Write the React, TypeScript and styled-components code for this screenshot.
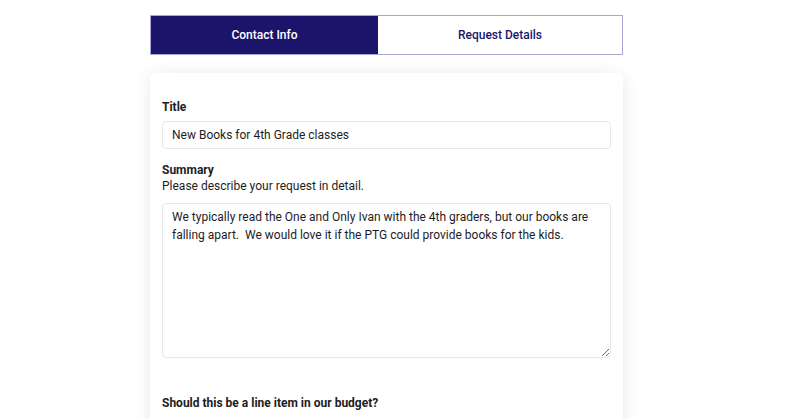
import styled, { createGlobalStyle } from "styled-components";

const GlobalStyle = createGlobalStyle`
    body {
        margin: 0;
        background: #ffffff;
        font-family: Roboto, "Liberation Sans", sans-serif;
        color: #1f1f1f;
    }
`;

const tabs = ["Contact Info", "Request Details"];

function App() {
    const active = 0;

    return (
        <>
            <GlobalStyle />
            <PageStyle>
                <TabBar>
                    {tabs.map((label, i) => (
                        <Tab key={label} $active={i === active}>
                            {label}
                        </Tab>
                    ))}
                </TabBar>
                <Card>
                    <Field>
                        <Label>Title</Label>
                        <TextInput defaultValue="New Books for 4th Grade classes" />
                    </Field>
                    <Field $top={13}>
                        <Label>Summary</Label>
                        <Help>Please describe your request in detail.</Help>
                        <TextArea
                            defaultValue={
                                "We typically read the One and Only Ivan with the 4th graders, but our books are falling apart.  We would love it if the PTG could provide books for the kids."
                            }
                        />
                    </Field>
                    <Field $top={37}>
                        <Label>Should this be a line item in our budget?</Label>
                    </Field>
                </Card>
            </PageStyle>
        </>
    );
}

const PageStyle = styled.div`
    width: 473px;
    padding: 15px 0 0 150px;
`;

const TabBar = styled.div`
    display: flex;
    height: 40px;
    border: 1px solid #a9a6d4;
    box-sizing: border-box;
`;

const Tab = styled.div<{ $active: boolean }>`
    flex: ${({ $active }) => ($active ? "0 0 227px" : "1")};
    display: flex;
    align-items: center;
    justify-content: center;
    font-size: 12px;
    font-weight: 500;
    background: ${({ $active }) => ($active ? "#1a156b" : "#ffffff")};
    color: ${({ $active }) => ($active ? "#ffffff" : "#1a156b")};
`;

const Card = styled.div`
    margin-top: 18px;
    padding: 26px 12px 40px;
    background: #ffffff;
    border-radius: 5px;
    box-shadow: 0 2px 18px rgba(0, 0, 0, 0.09);
`;

const Field = styled.div<{ $top?: number }>`
    display: flex;
    flex-direction: column;
    margin-top: ${({ $top }) => $top ?? 0}px;
`;

const Label = styled.label`
    font-size: 12px;
    font-weight: 700;
    line-height: 16px;
    color: #1d1d1f;
`;

const Help = styled.p`
    margin: 0;
    font-size: 12px;
    line-height: 16px;
    color: #1d1d1f;
`;

const TextInput = styled.input`
    margin-top: 6px;
    height: 28px;
    box-sizing: border-box;
    padding: 0 9px;
    border: 1px solid #e8e8e8;
    border-radius: 4px;
    font-family: inherit;
    font-size: 12px;
    color: #1d1d1f;
    outline: none;
`;

const TextArea = styled.textarea`
    margin-top: 9px;
    height: 155px;
    box-sizing: border-box;
    padding: 4px 9px;
    border: 1px solid #e8e8e8;
    border-radius: 4px;
    font-family: inherit;
    font-size: 12px;
    line-height: 18px;
    color: #1d1d1f;
    outline: none;
    resize: vertical;
`;

export default App;
